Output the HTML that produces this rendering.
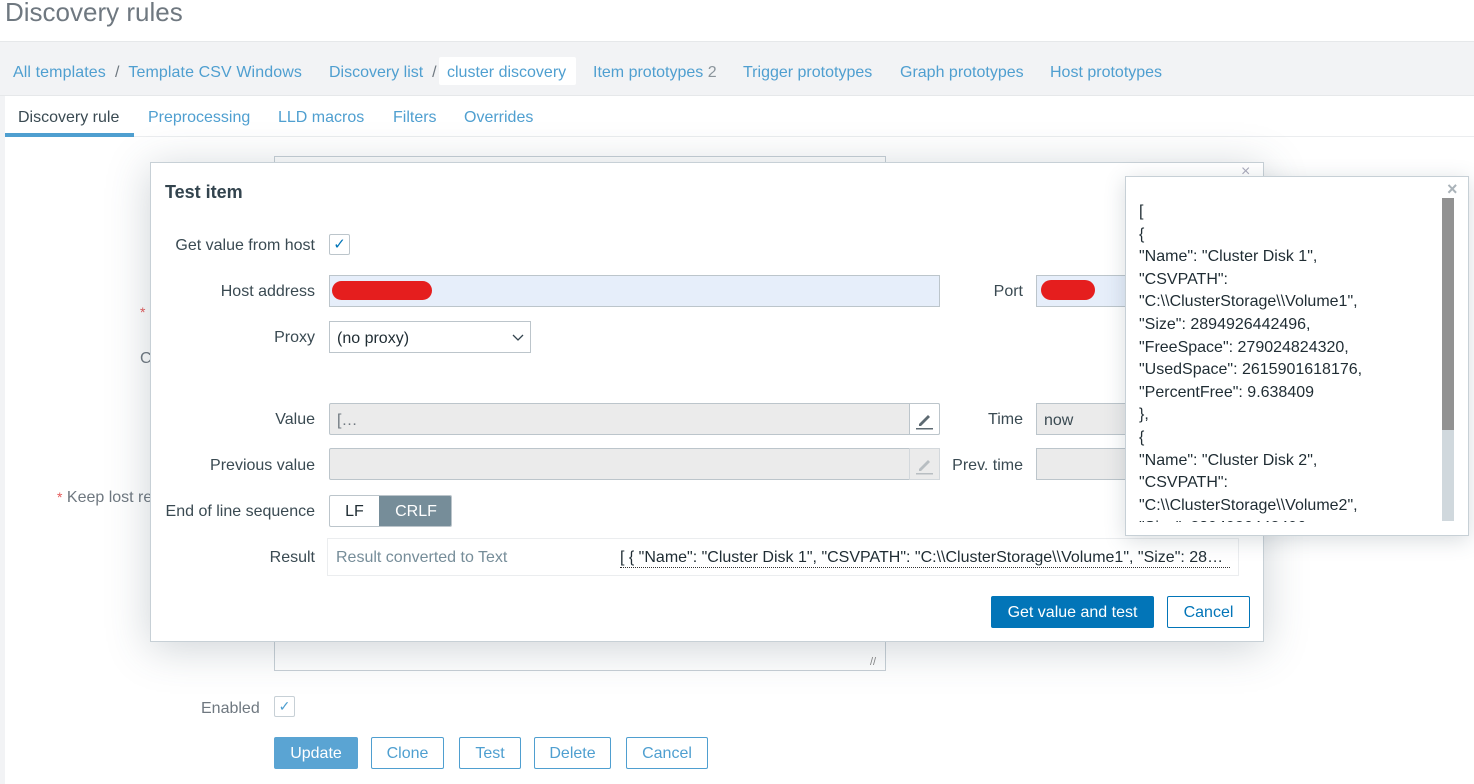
<!DOCTYPE html>
<html><head><meta charset="utf-8"><style>
*{box-sizing:border-box;margin:0;padding:0}
body{width:1474px;height:784px;overflow:hidden;background:#fff;font-family:"Liberation Sans",Arial,sans-serif;font-size:16px;color:#1f2c33;position:relative}
.a{position:absolute}
.lnk{color:#4f9fd0}
.lbl{position:absolute;text-align:right;color:#3a4a52;font-size:16px}
.inp{position:absolute;border:1px solid #bcc5cb;height:32px;font-size:16px;padding:7px 7px}
.btn{position:absolute;height:32px;border:1px solid #4f9fd0;color:#4f9fd0;background:#fff;border-radius:2px;font-size:16px;text-align:center;line-height:32px}
</style></head><body>
<div class="a" style="left:5px;top:-3px;font-size:26px;color:#6f7880">Discovery rules</div>
<div class="a" style="left:0;top:41px;width:1474px;height:55px;background:#f2f3f5;border-top:1px solid #e6e8ea;border-bottom:1px solid #e6e8ea"></div>
<div class="a" style="left:0;top:96px;width:5px;height:688px;background:#f2f3f5"></div>
<div class="a lnk" style="left:13px;top:64px;letter-spacing:0.1px">All templates <span style="color:#6f7880">&nbsp;/&nbsp;</span> Template CSV Windows</div>
<div class="a lnk" style="left:329px;top:64px">Discovery list <span style="color:#6f7880">&nbsp;/</span></div>
<div class="a lnk" style="left:439px;top:57px;width:137px;height:28px;background:#fff;border-radius:2px;padding:7px 0 0 8px">cluster discovery</div>
<div class="a lnk" style="left:593px;top:64px">Item prototypes <span style="color:#8a949b">2</span></div>
<div class="a lnk" style="left:743px;top:64px">Trigger prototypes</div>
<div class="a lnk" style="left:900px;top:64px">Graph prototypes</div>
<div class="a lnk" style="left:1050px;top:64px">Host prototypes</div>
<div class="a" style="left:5px;top:136px;width:1469px;height:1px;background:#ebedef"></div>
<div class="a" style="left:18px;top:109px;color:#3a4a52">Discovery rule</div>
<div class="a" style="left:5px;top:133px;width:129px;height:4px;background:#4f9fd0"></div>
<div class="a lnk" style="left:148px;top:109px">Preprocessing</div>
<div class="a lnk" style="left:278px;top:109px">LLD macros</div>
<div class="a lnk" style="left:393px;top:109px">Filters</div>
<div class="a lnk" style="left:464px;top:109px">Overrides</div>
<!-- background form -->
<div class="a" style="left:274px;top:156px;width:612px;height:8px;border:1px solid #c7d0d6;border-bottom:none"></div>
<div class="a" style="left:140px;top:304px;color:#e45959;font-size:14px">*</div>
<div class="a" style="left:140px;top:350px;color:#6f7880">C</div>
<div class="a" style="left:57px;top:489px;color:#6f7880"><span style="color:#e45959;font-size:14px">*</span> Keep lost re</div>
<div class="a" style="left:274px;top:640px;width:612px;height:31px;border:1px solid #c7d0d6;border-top:none"></div>
<div class="a" style="left:870px;top:656px;color:#888;font-size:11px">//</div>
<div class="a" style="left:201px;top:700px;color:#6f7880">Enabled</div>
<div class="a" style="left:274px;top:696px;width:21px;height:21px;border:1px solid #c7d0d6;border-radius:2px;color:#4f9fd0;font-size:14px;text-align:center;line-height:19px">✓</div>
<div class="btn" style="left:274px;top:737px;width:84px;background:#5aa4d3;border-color:#5aa4d3;color:#fff">Update</div>
<div class="btn" style="left:371px;top:737px;width:73px">Clone</div>
<div class="btn" style="left:459px;top:737px;width:62px">Test</div>
<div class="btn" style="left:534px;top:737px;width:77px">Delete</div>
<div class="btn" style="left:626px;top:737px;width:82px">Cancel</div>
<!-- modal -->
<div class="a" style="left:150px;top:162px;width:1114px;height:480px;background:#fff;border:1px solid #c7d0d6;box-shadow:0 6px 40px rgba(60,80,95,.25)"></div>
<div class="a" style="left:1241px;top:163px;color:#aab;font-size:16px">×</div>
<div class="a" style="left:165px;top:182px;font-size:18px;font-weight:bold;color:#33444e">Test item</div>
<div class="lbl" style="left:160px;width:155px;top:237px">Get value from host</div>
<div class="a" style="left:329px;top:234px;width:21px;height:21px;border:1px solid #bcc5cb;border-radius:2px;color:#0275b8;font-size:15px;text-align:center;line-height:19px">✓</div>
<div class="lbl" style="left:160px;width:155px;top:283px">Host address</div>
<div class="inp" style="left:329px;top:275px;width:611px;background:#e6eefa"></div>
<div class="a" style="left:332px;top:281px;width:100px;height:19px;background:#e51e1e;border-radius:10px"></div>
<div class="lbl" style="left:950px;width:73px;top:283px">Port</div>
<div class="inp" style="left:1036px;top:275px;width:100px;background:#e6eefa;border-right:none"></div>
<div class="a" style="left:1041px;top:280px;width:54px;height:20px;background:#e51e1e;border-radius:10px"></div>
<div class="lbl" style="left:160px;width:155px;top:329px">Proxy</div>
<div class="inp" style="left:329px;top:321px;width:202px;background:#fff;color:#1f2c33;padding-top:8px">(no proxy)<svg style="position:absolute;right:6px;top:10px" width="12" height="10"><path d="M1 3 L6 8 L11 3" stroke="#33444e" stroke-width="1.3" fill="none"/></svg></div>
<div class="lbl" style="left:160px;width:155px;top:411px">Value</div>
<div class="inp" style="left:329px;top:403px;width:611px;background:#ebebeb;color:#6f7880;border-radius:2px;padding-top:8px">[…</div>
<div class="a" style="left:909px;top:403px;width:31px;height:32px;border:1px solid #bcc5cb;background:#fff;border-radius:0 2px 2px 0"><svg width="29" height="30"><path d="M9 20 L18 11 L20 13 L11 22 L9 22Z" fill="#5d6a72"/><rect x="6" y="24" width="17" height="1.5" fill="#5d6a72"/></svg></div>
<div class="lbl" style="left:940px;width:83px;top:411px">Time</div>
<div class="inp" style="left:1036px;top:403px;width:100px;background:#ebebeb;color:#3a4a52;border-right:none;padding-top:8px">now</div>
<div class="lbl" style="left:160px;width:155px;top:457px">Previous value</div>
<div class="inp" style="left:329px;top:448px;width:611px;background:#ebebeb;border-radius:2px"></div>
<div class="a" style="left:909px;top:448px;width:31px;height:32px;border:1px solid #d3d8dc;background:#ebebeb"><svg width="29" height="30"><path d="M9 20 L18 11 L20 13 L11 22 L9 22Z" fill="#b8bec2"/><rect x="6" y="24" width="17" height="1.5" fill="#b8bec2"/></svg></div>
<div class="lbl" style="left:930px;width:93px;top:457px">Prev. time</div>
<div class="inp" style="left:1036px;top:448px;width:100px;background:#ebebeb;border-right:none"></div>
<div class="lbl" style="left:160px;width:155px;top:503px">End of line sequence</div>
<div class="a" style="left:329px;top:495px;width:123px;height:32px;border:1px solid #bcc5cb;border-radius:2px;overflow:hidden"><span style="position:absolute;left:0;width:49px;top:7px;text-align:center;color:#1f2c33">LF</span><span style="position:absolute;left:49px;top:0;width:74px;height:32px;background:#768d99;color:#fff;text-align:center;line-height:32px">CRLF</span></div>
<div class="lbl" style="left:160px;width:155px;top:549px">Result</div>
<div class="a" style="left:327px;top:538px;width:912px;height:38px;border:1px solid #ebedef"></div>
<div class="a" style="left:336px;top:549px;color:#768d99">Result converted to Text</div>
<div class="a" style="left:620px;top:549px;width:610px;white-space:nowrap;overflow:hidden;text-overflow:ellipsis;color:#1f2c33;border-bottom:1px dotted #333;height:19px">[ { "Name": "Cluster Disk 1", "CSVPATH": "C:\\ClusterStorage\\Volume1", "Size": 2894926442496</div>
<div class="btn" style="left:991px;top:596px;width:163px;background:#0275b8;border-color:#0275b8;color:#fff">Get value and test</div>
<div class="btn" style="left:1167px;top:596px;width:83px;border-color:#0275b8;color:#0275b8">Cancel</div>
<!-- popup -->
<div class="a" style="left:1125px;top:176px;width:344px;height:360px;background:#fff;border:1px solid #c7d0d6;box-shadow:0 4px 20px rgba(60,80,95,.2)"></div>
<div class="a" style="left:1447px;top:179px;color:#aab3b9;font-size:18px;font-weight:bold">×</div>
<div class="a" style="left:1442px;top:198px;width:12px;height:323px;background:#d0d8dd"></div>
<div class="a" style="left:1442px;top:198px;width:12px;height:232px;background:#929292"></div>
<div class="a" style="left:1139px;top:201px;height:321px;overflow:hidden;line-height:22.6px;color:#1f2c33;white-space:pre;font-size:16px">[
{
"Name": "Cluster Disk 1",
"CSVPATH":
"C:\\ClusterStorage\\Volume1",
"Size": 2894926442496,
"FreeSpace": 279024824320,
"UsedSpace": 2615901618176,
"PercentFree": 9.638409
},
{
"Name": "Cluster Disk 2",
"CSVPATH":
"C:\\ClusterStorage\\Volume2",
"Size": 2894926442496,</div>
</body></html>
